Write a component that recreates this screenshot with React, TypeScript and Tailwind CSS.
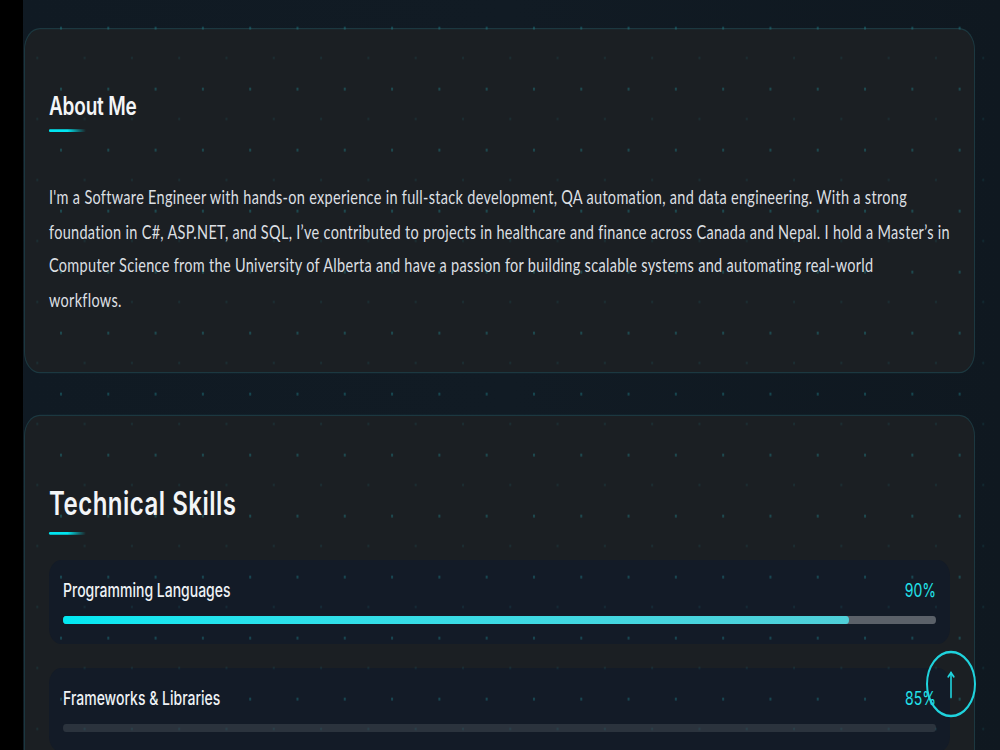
import React from "react";

const skills = [
  { name: "Programming Languages", pct: 90, active: true },
  { name: "Frameworks & Libraries", pct: 85, active: false },
  { name: "Databases & Data Tools", pct: 80, active: false },
];

const aboutLines = [
  "I'm a Software Engineer with hands-on experience in full-stack development, QA automation, and data engineering. With a strong",
  "foundation in C#, ASP.NET, and SQL, I’ve contributed to projects in healthcare and finance across Canada and Nepal. I hold a Master’s in",
  "Computer Science from the University of Alberta and have a passion for building scalable systems and automating real-world",
  "workflows.",
];

function SkillItem({ name, pct, active }: { name: string; pct: number; active: boolean }) {
  return (
    <div className="rounded-xl bg-[#131b27] px-[14px] pt-[13px] pb-[15px]">
      <div className="flex items-center justify-between text-[14px] leading-5 font-medium font-['Inter',sans-serif]">
        <span className="text-[#eef2f5]">{name}</span>
        <span className="text-[#22e1ea] font-normal">{pct}%</span>
      </div>
      <div className={`mt-[9px] h-[6px] w-full rounded-full ${active ? "bg-[#5b6169]" : "bg-[#2b333d]"}`}>
        {active && (
          <div
            className="h-full rounded-full bg-gradient-to-r from-[#00e8f2] to-[#4fcfd8]"
            style={{ width: `${pct}%` }}
          />
        )}
      </div>
    </div>
  );
}

export default function App() {
  return (
    <div className="h-[750px] w-full overflow-hidden bg-[#101a23]">
      <div className="relative flex h-[562.5px] w-full origin-top scale-y-[1.33333] overflow-hidden bg-[#101a23]">
        <div className="w-[23px] shrink-0 bg-black" />
        <main className="flex min-w-0 flex-1 flex-col gap-[31.5px] pl-px pr-[25px] pt-[21px] bg-gradient-to-r from-[#101a23] via-[#111b24] to-[#0f1820]">
          <section className="min-w-0 rounded-2xl border border-[rgba(34,211,238,0.14)] bg-[#1b1f23] px-6 pt-[44px] pb-[41px]">
            <h2 className="font-['Inter',sans-serif] text-[19px] leading-7 font-semibold tracking-[-0.2px] text-[#f3f5f7]">
              About Me
            </h2>
            <div className="mt-[3px] h-[2px] w-[37px] rounded-full bg-gradient-to-r from-[#00e5f0] via-[#00e5f0] to-transparent" />
            <p className="mt-9 font-['Lato',sans-serif] text-[14.5px] leading-[25.7px] font-normal text-[#dcdfe2] tracking-[0.3px]">
              {aboutLines.map((l) => (
                <span key={l} className="block whitespace-nowrap">
                  {l}
                </span>
              ))}
            </p>
          </section>
          <section className="min-w-0 rounded-2xl border border-[rgba(34,211,238,0.14)] bg-[#1b1f23] px-6 pt-[50px] pb-10">
            <h2 className="font-['Inter',sans-serif] text-[24px] leading-8 font-semibold tracking-[0.5px] text-[#f3f5f7]">
              Technical Skills
            </h2>
            <div className="mt-[5px] h-[2px] w-[37px] rounded-full bg-gradient-to-r from-[#00e5f0] via-[#00e5f0] to-transparent" />
            <div className="mt-[19px] flex flex-col gap-[18px]">
              {skills.map((s) => (
                <SkillItem key={s.name} {...s} />
              ))}
            </div>
          </section>
        </main>
        <div className="pointer-events-none absolute inset-y-0 left-[23px] right-0 bg-[radial-gradient(circle_at_1px_1px,rgba(35,150,160,0.36)_0.9px,transparent_1.5px),radial-gradient(circle_at_1px_1px,rgba(35,150,160,0.14)_0.7px,transparent_1.2px)] bg-[length:47.3px_45.75px] bg-[position:37px_20px,13.3px_42.5px]" />
        <button className="absolute left-[925.7px] top-[487.5px] flex h-[50px] w-[50px] items-center justify-center rounded-full border-2 border-[#1fd3dd]">
          <svg width="12" height="24" viewBox="0 0 12 24" fill="none" stroke="#1fd3dd" strokeWidth="1.6" strokeLinecap="round" strokeLinejoin="round">
            <path d="M6 3.5V22" />
            <path d="M3.2 6.5L6 3.5L8.8 6.5" />
          </svg>
        </button>
      </div>
    </div>
  );
}
